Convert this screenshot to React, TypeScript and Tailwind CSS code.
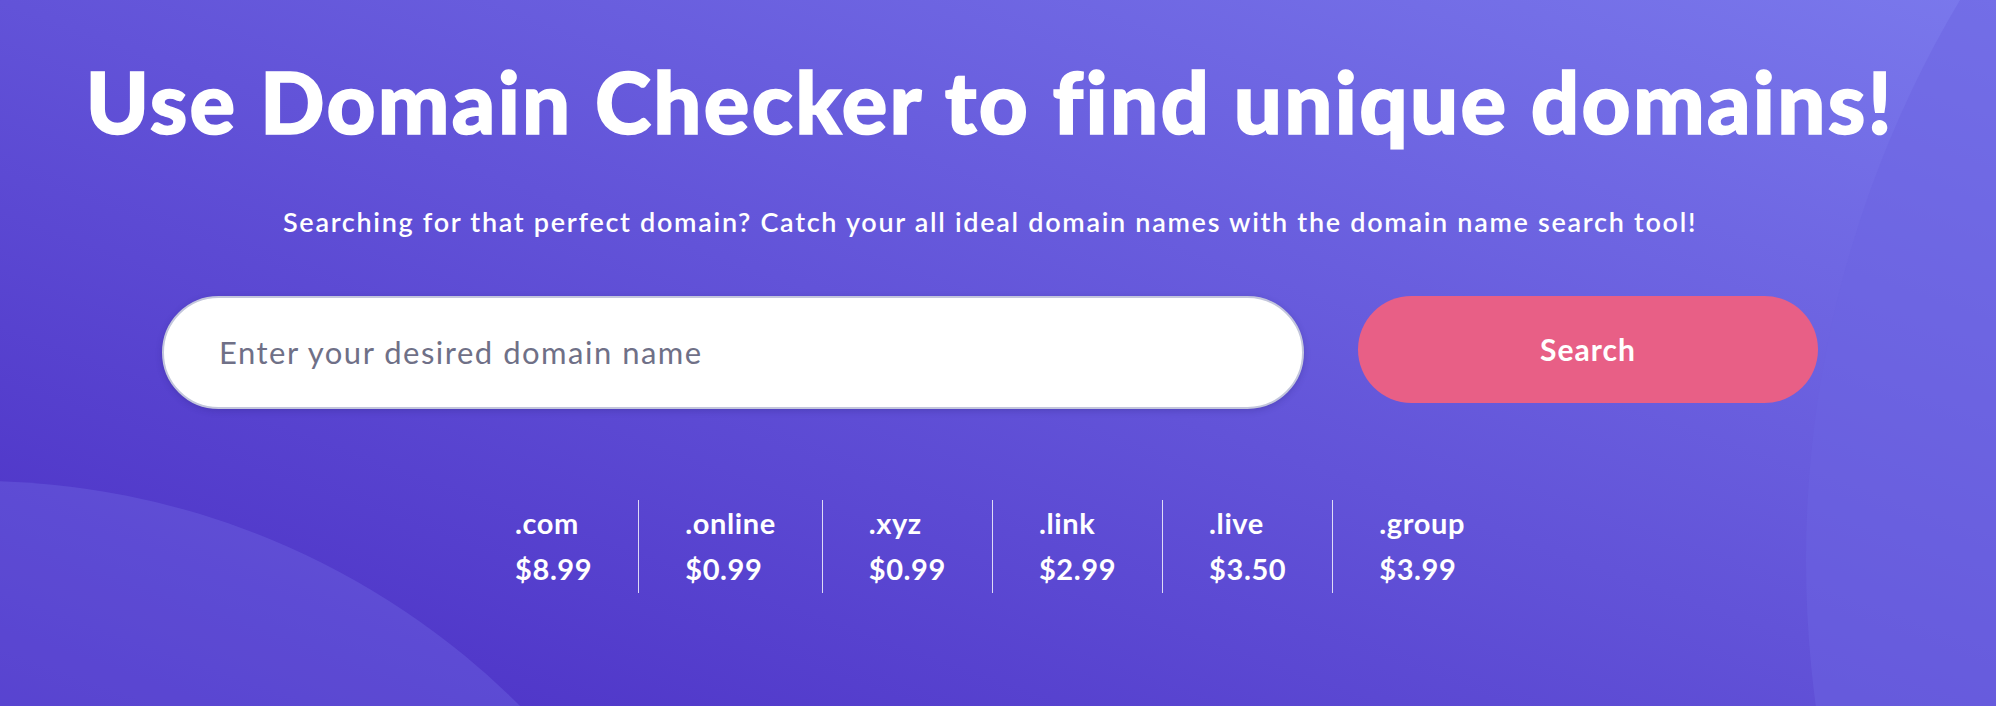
import React from "react";

const domains = [
  { name: ".com", price: "$8.99" },
  { name: ".online", price: "$0.99" },
  { name: ".xyz", price: "$0.99" },
  { name: ".link", price: "$2.99" },
  { name: ".live", price: "$3.50" },
  { name: ".group", price: "$3.99" },
];

export default function App() {
  return (
    <div
      className="relative w-full h-[706px] overflow-hidden bg-[linear-gradient(to_top_right,#4a2ec4,#7a78ec)] text-white"
      style={{ fontFamily: "Lato, 'Noto Sans', sans-serif" }}
    >
      <div className="absolute left-[-791px] top-[481px] w-[1536px] h-[1536px] rounded-full bg-[#7a78ec]/30" />
      <div className="absolute left-[1806px] top-[-535px] w-[2190px] h-[2190px] rounded-full bg-[#6b64e2]/50" />

      <div className="relative flex flex-col items-center pr-[16px]">
        <h1 className="mt-[59px] text-[85px] leading-none font-black tracking-[2.3px] [-webkit-text-stroke:1.5px_white] whitespace-nowrap">
          Use Domain Checker to find unique domains!
        </h1>
        <p className="mt-[64px] text-[27px] leading-none font-semibold tracking-[1.7px] whitespace-nowrap">
          Searching for that perfect domain? Catch your all ideal domain names with the domain name search tool!
        </p>

        <div className="mt-[61px] flex items-start gap-[54px] w-[1656px]">
          <div className="flex-1 h-[113px] rounded-full bg-white border-2 border-[#c3c6dc] shadow-[0_2px_6px_rgba(40,30,120,0.25)] flex items-center pl-[55px]">
            <input
              className="w-full bg-transparent outline-none text-[31px] tracking-[1.5px] text-[#33344a] placeholder:text-[#6f7087]"
              placeholder="Enter your desired domain name"
              style={{ fontFamily: "Lato, 'Noto Sans', sans-serif" }}
            />
          </div>
          <button className="w-[460px] h-[107px] rounded-full bg-[#e85f86] text-white text-[30px] font-bold tracking-[1px]">
            Search
          </button>
        </div>

        <div className="mt-[91px] flex justify-center">
          {domains.map((d, i) => (
            <div
              key={d.name}
              className={
                "px-[46px] flex flex-col h-[93px] " +
                (i > 0 ? "border-l-[1.5px] border-white/80" : "")
              }
            >
              <span className="text-[29px] leading-[46px] font-bold tracking-[0.6px]">{d.name}</span>
              <span className="text-[29px] leading-[46px] font-bold tracking-[0.6px]">{d.price}</span>
            </div>
          ))}
        </div>
      </div>
    </div>
  );
}
